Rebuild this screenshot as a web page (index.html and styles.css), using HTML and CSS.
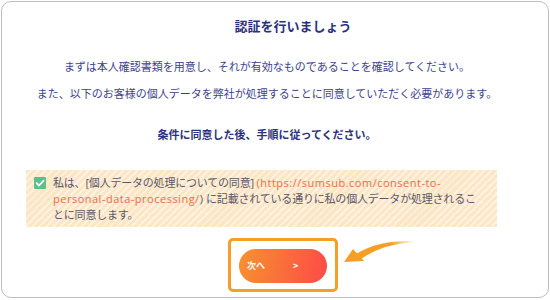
FILE: index.html
```html
<!DOCTYPE html>
<html lang="ja">
<head>
  <meta charset="UTF-8" />
  <meta name="viewport" content="width=device-width, initial-scale=1.0"/>
  <title>認証を行いましょう</title>
  <link rel="stylesheet" href="styles.css">
</head>
<body>

  <div class="card">
    <h2 class="title">認証を行いましょう</h2>

    <p class="intro first">まずは本人確認書類を用意し、それが有効なものであることを確認してください。</p>
    <p class="intro">また、以下のお客様の個人データを弊社が処理することに同意していただく必要があります。</p>

    <p class="notice">条件に同意した後、手順に従ってください。</p>

    <!-- CONSENT -->
    <label class="consent">
      <span class="check">
        <svg width="12" height="12" viewBox="0 0 12 12">
          <path d="M2.6 6.2 L5 8.5 L9.6 3.6" fill="none" stroke="#fff" stroke-width="1.8" stroke-linecap="round" stroke-linejoin="round"/>
        </svg>
      </span>
      <span class="consent-text">私は、[個人データの処理についての同意] <a class="link">(https://sumsub.com/consent-to-personal-data-processing/</a><span class="latin">)</span> に記載されている通りに私の個人データが処理されることに同意します。</span>
    </label>

    <!-- NEXT BUTTON -->
    <div class="actions">
      <div class="highlight">
        <button class="next">次へ <span class="chev">&gt;</span></button>
      </div>
    </div>

    <svg class="pointer" width="80" height="32" viewBox="0 0 80 32">
      <defs>
        <linearGradient id="fade" x1="0" y1="0" x2="1" y2="0">
          <stop offset="0" stop-color="#f5a024"/>
          <stop offset="0.6" stop-color="#f5a024"/>
          <stop offset="1" stop-color="#f5a024" stop-opacity="0"/>
        </linearGradient>
      </defs>
      <path d="M14 19 Q36 5 72 6 L72 7.2 Q40 9 19 24 Z" fill="url(#fade)"/>
      <path d="M2 27 L11 14 L22 26 Z" fill="#f5a024"/>
    </svg>
  </div>

</body>
</html>
```

FILE: styles.css
```css
body {
  margin: 0;
  padding: 0;
  font-family: 'Noto Sans CJK JP', 'Noto Sans', sans-serif;
  background: #fff;
}

.card {
  position: relative;
  box-sizing: border-box;
  margin: 1px;
  width: 548px;
  height: 297px;
  border: 1px solid #bdbdbd;
  border-radius: 10px;
  padding: 15px 0 0 24px;
}

.title {
  margin: 0;
  padding-left: 26px;
  width: 482px;
  text-align: center;
  font-size: 13px;
  line-height: 18px;
  font-weight: 700;
  color: #2c3180;
}

.intro {
  margin: 11px 0 0;
  width: 482px;
  text-align: center;
  font-size: 11px;
  line-height: 16px;
  color: #3d428f;
}

.intro.first {
  margin-top: 23px;
}

.notice {
  margin: 25px 0 0;
  width: 482px;
  text-align: center;
  font-size: 11px;
  line-height: 16px;
  font-weight: 700;
  color: #2c3180;
}

.consent {
  display: flex;
  align-items: flex-start;
  gap: 7px;
  box-sizing: border-box;
  margin-top: 28px;
  width: 471px;
  height: 57px;
  padding: 5px 16px 0 8px;
  background: repeating-linear-gradient(-45deg, #fde6c6 0 3px, #fdf1e0 3px 5px);
}

.check {
  flex: none;
  display: flex;
  align-items: center;
  justify-content: center;
  margin-top: 2px;
  width: 12px;
  height: 12px;
  border-radius: 1px;
  background: #5dbf8d;
}

.consent-text {
  font-family: 'Open Sans', 'Noto Sans CJK JP', sans-serif;
  font-size: 11px;
  line-height: 16px;
  color: #5b5866;
  letter-spacing: -0.2px;
}

.link,
.latin {
  letter-spacing: 0.5px;
}

.link {
  color: #f26a4b;
}

.actions {
  margin-top: 11px;
  padding-left: 202px;
}

.highlight {
  display: inline-block;
  border: 3px solid #f5a024;
  border-radius: 5px;
  padding: 8px 8px 6px;
  line-height: 0;
}

.next {
  width: 88px;
  height: 34px;
  border: none;
  border-radius: 17px;
  background: linear-gradient(100deg, #f7922f, #fd4a47);
  color: #fff;
  font-family: 'Noto Sans CJK JP', sans-serif;
  font-size: 9px;
  font-weight: 700;
  padding: 0 0 2px 8px;
  text-align: left;
}

.chev {
  margin-left: 26px;
}

.pointer {
  position: absolute;
  left: 340px;
  top: 233px;
}
```
